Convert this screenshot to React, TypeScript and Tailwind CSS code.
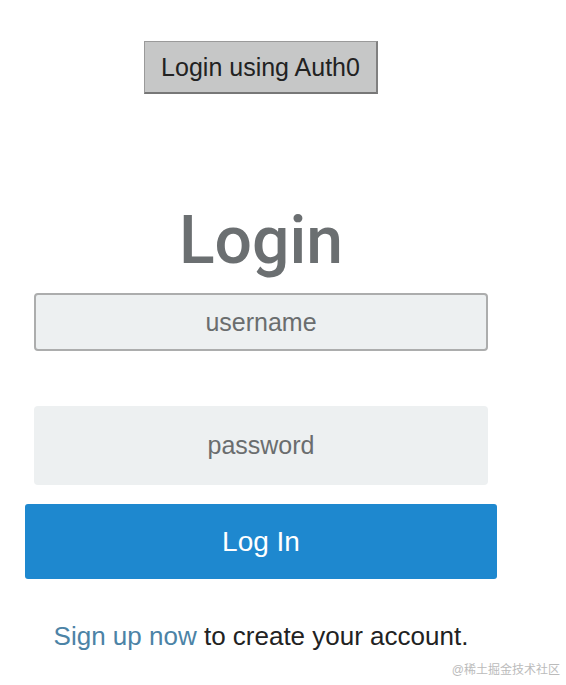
import React from 'react';

const App: React.FC = () => {
  return (
    <div className="relative w-[566px] h-[685px] bg-white font-['Liberation_Sans',Arial,sans-serif] overflow-hidden">
      <div className="ml-[25px] w-[472px] flex flex-col items-center pt-[41px]">
        <button
          type="button"
          className="w-[234px] h-[53px] bg-[#c6c7c7] text-[#222] text-[25px] leading-none border border-[#9a9a9a] border-b-2 border-r-2 border-b-[#777] border-r-[#808080]"
        >
          Login using Auth0
        </button>

        <h1 className="mt-[114px] text-[66px] leading-none font-medium text-[#6b6f71] font-['Roboto',Arial,sans-serif]">Login</h1>

        <form className="w-full flex flex-col items-center">
          <input
            type="text"
            placeholder="username"
            className="mt-[19px] w-[454px] h-[58px] bg-[#edf0f1] border-2 border-[#acadad] rounded-[4px] text-center text-[25px] text-[#555] placeholder:text-[#6a6d6e] focus:outline-none"
          />
          <input
            type="password"
            placeholder="password"
            className="mt-[55px] w-[454px] h-[79px] bg-[#edf0f1] rounded-[4px] text-center text-[25px] text-[#555] placeholder:text-[#6a6d6e] focus:outline-none"
          />
          <button
            type="submit"
            className="mt-[19px] w-[472px] h-[75px] bg-[#1e88cf] rounded-[3px] text-white text-[28px] leading-none"
          >
            Log In
          </button>
        </form>

        <p className="mt-[44px] text-[26px] leading-none text-[#222] whitespace-nowrap">
          <a href="#" className="text-[#4c83a6]">Sign up now</a> to create your account.
        </p>
      </div>

      <span className="absolute right-[6px] bottom-[9px] text-[12px] leading-none text-[#bbb] font-['Liberation_Sans','Noto_Sans_CJK_SC',sans-serif]">
        @稀土掘金技术社区
      </span>
    </div>
  );
};

export default App;
